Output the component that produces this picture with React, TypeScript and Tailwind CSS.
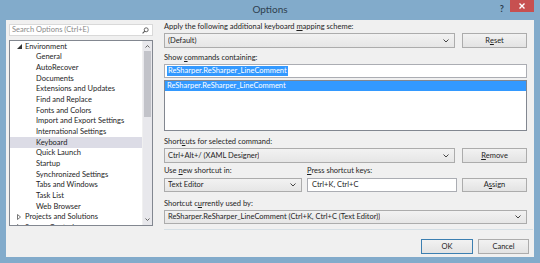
import React from 'react';

const font = { fontFamily: 'Lato, "Noto Sans", sans-serif' };

const treeItems: { label: string; level: 0 | 1; arrow?: 'open' | 'closed'; selected?: boolean }[] = [
  { label: 'Environment', level: 0, arrow: 'open' },
  { label: 'General', level: 1 },
  { label: 'AutoRecover', level: 1 },
  { label: 'Documents', level: 1 },
  { label: 'Extensions and Updates', level: 1 },
  { label: 'Find and Replace', level: 1 },
  { label: 'Fonts and Colors', level: 1 },
  { label: 'Import and Export Settings', level: 1 },
  { label: 'International Settings', level: 1 },
  { label: 'Keyboard', level: 1, selected: true },
  { label: 'Quick Launch', level: 1 },
  { label: 'Startup', level: 1 },
  { label: 'Synchronized Settings', level: 1 },
  { label: 'Tabs and Windows', level: 1 },
  { label: 'Task List', level: 1 },
  { label: 'Web Browser', level: 1 },
  { label: 'Projects and Solutions', level: 0, arrow: 'closed' },
  { label: 'Source Control', level: 0, arrow: 'closed' },
];

const Chevron = () => (
  <svg width="6" height="4" viewBox="0 0 6 4" className="shrink-0">
    <path d="M0.5 0.5 L3 3 L5.5 0.5" fill="none" stroke="#444" strokeWidth="1" />
  </svg>
);

const Combo: React.FC<{ text: string; className?: string }> = ({ text, className }) => (
  <div
    className={`flex items-center justify-between border border-[#acacac] bg-gradient-to-b from-[#f2f2f2] to-[#e6e6e6] pl-[3px] pr-[5px] ${className ?? ''}`}
  >
    <span className="truncate">{text}</span>
    <Chevron />
  </div>
);

const Button: React.FC<{ children: React.ReactNode; className?: string; primary?: boolean }> = ({
  children,
  className,
  primary,
}) => (
  <div
    className={`flex items-center justify-center border bg-gradient-to-b from-[#f2f2f2] to-[#e3e3e3] ${
      primary ? 'border-[#3c7fb1]' : 'border-[#acacac]'
    } ${className ?? ''}`}
  >
    {children}
  </div>
);

const Label: React.FC<{ children: React.ReactNode; className?: string }> = ({ children, className }) => (
  <div className={`h-[10px] leading-[10px] whitespace-nowrap ${className ?? ''}`}>{children}</div>
);

const App: React.FC = () => {
  return (
    <div className="w-[540px] h-[263px] bg-[#82abcb] flex flex-col text-[7.5px] text-[#1e1e1e]" style={font}>
      {/* title bar */}
      <div className="h-[20px] flex items-start relative">
        <div className="flex-1 text-center text-[10px] leading-[18px] text-[#2f3f4f]">Options</div>
        <div className="absolute right-[36px] top-[2px] text-[9px] font-bold text-[#2b3b4b]">?</div>
        <div className="absolute right-[6px] top-0 w-[24px] h-[12px] bg-[#c75050] flex items-center justify-center">
          <svg width="6" height="6" viewBox="0 0 6 6">
            <path d="M0.5 0.5 L5.5 5.5 M5.5 0.5 L0.5 5.5" stroke="#fff" strokeWidth="1.4" />
          </svg>
        </div>
      </div>

      {/* client area */}
      <div className="mx-[6px] h-[237px] bg-[#f0f0f0] flex flex-col">
        <div className="flex">
          {/* left column */}
          <div className="ml-[3px] w-[144px] flex flex-col pt-[4px]">
            <div className="h-[12px] border border-[#d9d9d9] bg-white flex items-center justify-between pl-[2px] pr-[3px] text-[#8a8a8a]">
              <span>Search Options (Ctrl+E)</span>
              <svg width="7" height="7" viewBox="0 0 7 7">
                <circle cx="4.2" cy="2.8" r="2" fill="none" stroke="#555" strokeWidth="0.9" />
                <path d="M2.8 4.2 L0.6 6.4" stroke="#555" strokeWidth="1.1" />
              </svg>
            </div>
            <div className="mt-[4px] h-[186px] border border-[#828790] bg-white flex overflow-hidden">
              <div className="flex-1 flex flex-col overflow-hidden">
                {treeItems.map((item) => (
                  <div
                    key={item.label}
                    className={`h-[10.67px] shrink-0 flex items-center whitespace-nowrap ${
                      item.selected ? 'bg-[#dcdce6]' : ''
                    }`}
                  >
                    {item.level === 0 ? (
                      <>
                        <span className="w-[15px] flex justify-center pl-[3px]">
                          {item.arrow === 'open' ? (
                            <svg width="5" height="5" viewBox="0 0 5 5">
                              <path d="M5 0 L5 5 L0 5 Z" fill="#333" />
                            </svg>
                          ) : (
                            <svg width="4" height="6" viewBox="0 0 4 6">
                              <path d="M0.5 0.5 L3.5 3 L0.5 5.5 Z" fill="none" stroke="#555" strokeWidth="0.8" />
                            </svg>
                          )}
                        </span>
                        <span>{item.label}</span>
                      </>
                    ) : (
                      <span className="pl-[26px]">{item.label}</span>
                    )}
                  </div>
                ))}
              </div>
              {/* scrollbar */}
              <div className="w-[10px] bg-[#e8e8ec] flex flex-col items-center border-l border-[#f0f0f0]">
                <div className="h-[10px] flex items-center">
                  <svg width="5" height="3" viewBox="0 0 5 3">
                    <path d="M0.5 2.5 L2.5 0.5 L4.5 2.5" fill="none" stroke="#555" strokeWidth="0.9" />
                  </svg>
                </div>
                <div className="w-[7px] h-[66px] bg-[#c2c3c9]" />
                <div className="flex-1" />
                <div className="h-[12px] flex items-center">
                  <svg width="5" height="3" viewBox="0 0 5 3">
                    <path d="M0.5 0.5 L2.5 2.5 L4.5 0.5" fill="none" stroke="#555" strokeWidth="0.9" />
                  </svg>
                </div>
              </div>
            </div>
          </div>

          {/* right column */}
          <div className="ml-[11px] w-[363px] flex flex-col pt-[2px]">
            <Label>
              Apply the following additional keyboard <u>m</u>apping scheme:
            </Label>
            <div className="mt-[1px] flex gap-[7px] h-[15px]">
              <Combo text="(Default)" className="w-[291px]" />
              <Button className="w-[65px]">
                R<u>e</u>set
              </Button>
            </div>
            <Label className="mt-[5px]">
              Show <u>c</u>ommands containing:
            </Label>
            <div className="mt-[1px] h-[14px] w-[363px] border border-[#abadb3] bg-white flex items-center pl-[2px]">
              <span className="bg-[#3399ff] text-white leading-[10px] px-[1px]">ReSharper.ReSharper_LineComment</span>
            </div>
            <div className="mt-[2px] h-[51px] w-[363px] border border-[#828790] bg-white">
              <div className="h-[10px] bg-[#3399ff] text-white leading-[10px] pl-[2px]">
                ReSharper.ReSharper_LineComment
              </div>
            </div>
            <Label className="mt-[6px]">
              Short<u>c</u>uts for selected command:
            </Label>
            <div className="mt-[1px] flex gap-[7px] h-[15px]">
              <Combo text="Ctrl+Alt+/ (XAML Designer)" className="w-[291px]" />
              <Button className="w-[65px]">
                <u>R</u>emove
              </Button>
            </div>
            <div className="mt-[3px] flex">
              <Label className="w-[143px]">
                Use <u>n</u>ew shortcut in:
              </Label>
              <Label>
                <u>P</u>ress shortcut keys:
              </Label>
            </div>
            <div className="mt-[2px] flex gap-[5px] h-[14px]">
              <Combo text="Text Editor" className="w-[138px]" />
              <div className="w-[150px] border border-[#abadb3] bg-white flex items-center pl-[4px]">Ctrl+K, Ctrl+C</div>
              <Button className="w-[65px]">
                A<u>s</u>sign
              </Button>
            </div>
            <Label className="mt-[7px]">
              Shortcut c<u>u</u>rrently used by:
            </Label>
            <div className="mt-[1px] h-[14px] flex">
              <Combo text="ReSharper.ReSharper_LineComment (Ctrl+K, Ctrl+C (Text Editor))" className="w-[363px]" />
            </div>
          </div>
        </div>

        {/* separator */}
        <div className="mt-[3px] ml-[158px] mr-[1px] h-px bg-[#d5dfe5]" />

        {/* bottom buttons */}
        <div className="mt-[9px] flex justify-end gap-[5px] pr-[5px]">
          <Button primary className="w-[52px] h-[15px]">
            OK
          </Button>
          <Button className="w-[51px] h-[15px]">Cancel</Button>
        </div>
      </div>
    </div>
  );
};

export default App;
